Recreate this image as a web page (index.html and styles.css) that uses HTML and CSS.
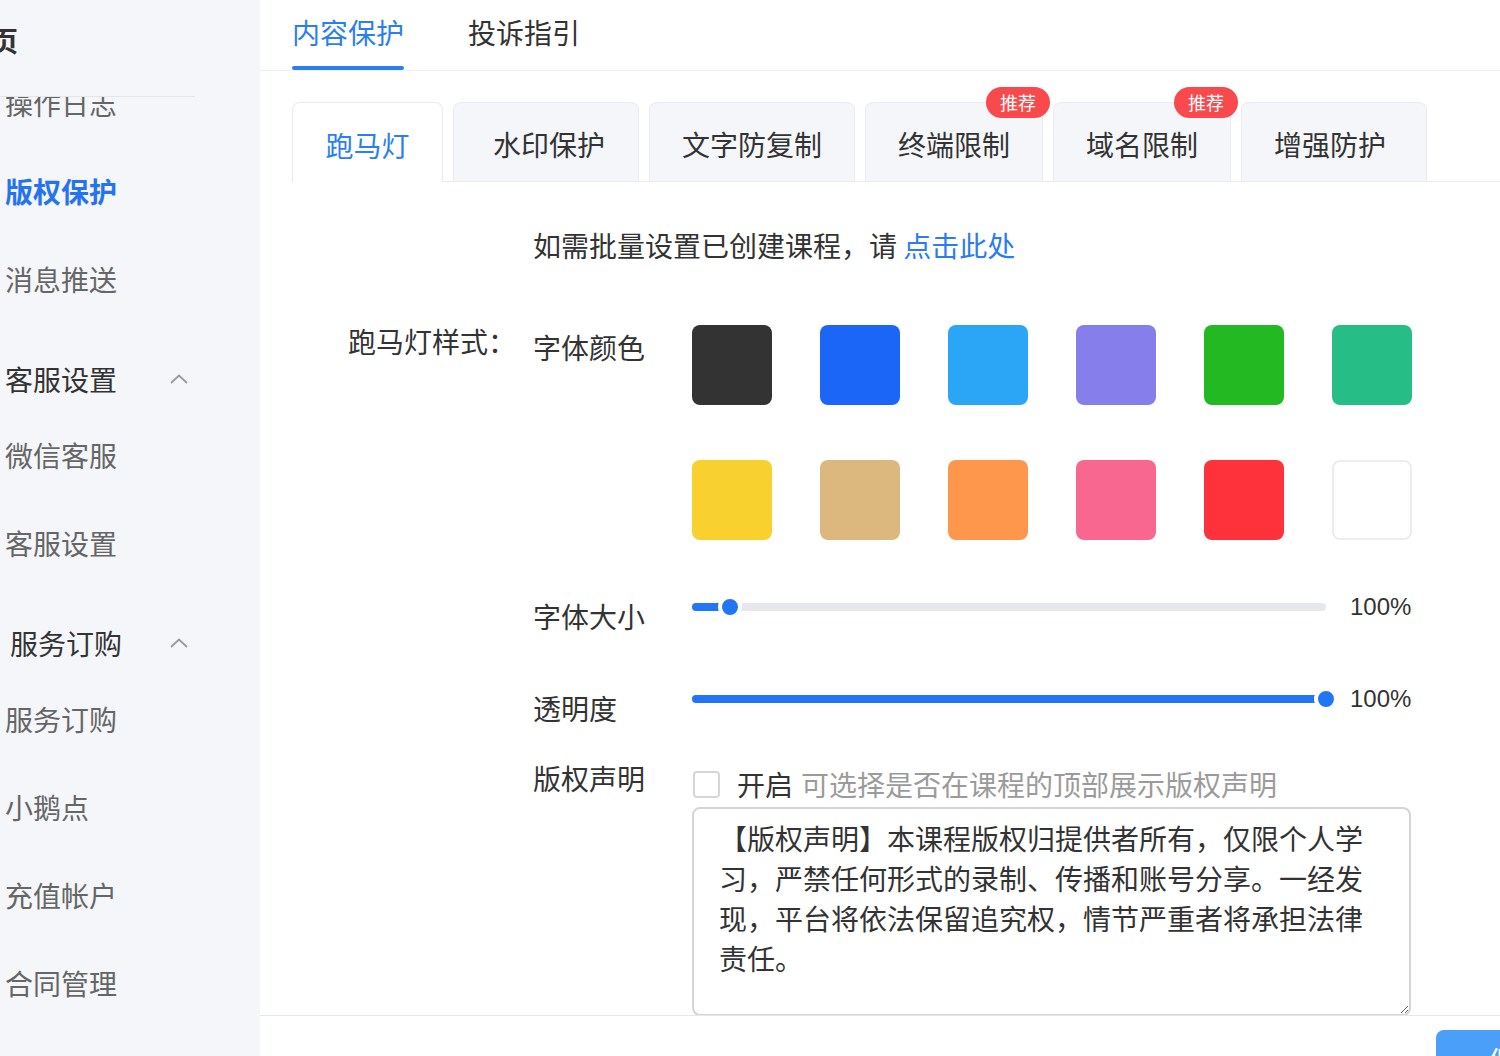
FILE: index.html
```html
<!DOCTYPE html>
<html lang="zh-CN">
<head>
    <meta charset="UTF-8">
    <meta name="viewport" content="width=device-width, initial-scale=1.0">
    <title>版权保护</title>
    <link rel="stylesheet" href="styles.css">
</head>
<body>

<div class="layout">
    <!-- Sidebar -->
    <div class="sidebar">
        <div class="sidebar-head">
            <div class="sidebar-title">首页</div>
        </div>
        <div class="menu">
            <div class="menu-list">
                <div class="menu-item">操作日志</div>
                <div class="menu-item active">版权保护</div>
                <div class="menu-item">消息推送</div>

                <div class="menu-group">
                    <span>客服设置</span>
                    <svg class="chevron" width="18" height="10" viewBox="0 0 18 10"><polyline points="1,9 9,1.5 17,9" fill="none" stroke="#9a9a9a" stroke-width="1.8"/></svg>
                </div>
                <div class="menu-item">微信客服</div>
                <div class="menu-item">客服设置</div>

                <div class="menu-group indent">
                    <span>服务订购</span>
                    <svg class="chevron" width="18" height="10" viewBox="0 0 18 10"><polyline points="1,9 9,1.5 17,9" fill="none" stroke="#9a9a9a" stroke-width="1.8"/></svg>
                </div>
                <div class="menu-item">服务订购</div>
                <div class="menu-item">小鹅点</div>
                <div class="menu-item">充值帐户</div>
                <div class="menu-item">合同管理</div>
            </div>
        </div>
    </div>

    <!-- Main -->
    <div class="main">
        <div class="top-tabs">
            <div class="top-tab active">内容保护<span class="tab-bar"></span></div>
            <div class="top-tab">投诉指引</div>
        </div>

        <div class="body">
            <div class="card-tabs">
                <div class="card-tab active">跑马灯</div>
                <div class="card-tab shift">水印保护</div>
                <div class="card-tab">文字防复制</div>
                <div class="card-tab">终端限制<span class="badge">推荐</span></div>
                <div class="card-tab">域名限制<span class="badge">推荐</span></div>
                <div class="card-tab shift-left">增强防护</div>
            </div>

            <div class="form">
                <div class="notice">如需批量设置已创建课程，请 <a class="link">点击此处</a></div>

                <div class="form-row">
                    <div class="form-label">跑马灯样式：</div>
                    <div class="form-fields">
                        <div class="field">
                            <div class="field-label color-label">字体颜色</div>
                            <div class="swatches">
                                <div class="swatch" style="background:#333333"></div>
                                <div class="swatch" style="background:#1b66f6"></div>
                                <div class="swatch" style="background:#2ba6f6"></div>
                                <div class="swatch" style="background:#867eea"></div>
                                <div class="swatch" style="background:#22b923"></div>
                                <div class="swatch" style="background:#26bd86"></div>
                                <div class="swatch" style="background:#f8d12f"></div>
                                <div class="swatch" style="background:#dcb87e"></div>
                                <div class="swatch" style="background:#fe974c"></div>
                                <div class="swatch" style="background:#f8678f"></div>
                                <div class="swatch" style="background:#fe323b"></div>
                                <div class="swatch white"></div>
                            </div>
                        </div>

                        <div class="field slider-field">
                            <div class="field-label slider-label">字体大小</div>
                            <div class="slider">
                                <div class="track">
                                    <div class="fill" style="width:38px"></div>
                                    <div class="thumb" style="left:38px"></div>
                                </div>
                                <div class="value">100%</div>
                            </div>
                        </div>

                        <div class="field slider-field opacity">
                            <div class="field-label slider-label">透明度</div>
                            <div class="slider">
                                <div class="track">
                                    <div class="fill" style="width:634px"></div>
                                    <div class="thumb" style="left:634px"></div>
                                </div>
                                <div class="value">100%</div>
                            </div>
                        </div>

                        <div class="field copyright">
                            <div class="field-label">版权声明</div>
                            <div class="copyright-box">
                                <div class="check-line">
                                    <span class="checkbox"></span>
                                    <span>开启</span>
                                    <span class="hint">可选择是否在课程的顶部展示版权声明</span>
                                </div>
                                <textarea class="statement">【版权声明】本课程版权归提供者所有，仅限个人学习，严禁任何形式的录制、传播和账号分享。一经发现，平台将依法保留追究权，情节严重者将承担法律责任。</textarea>
                            </div>
                        </div>
                    </div>
                </div>
            </div>
        </div>

        <div class="footer">
            <button class="save-btn">保存</button>
        </div>
    </div>
</div>

</body>
</html>
```

FILE: styles.css
```css
body {
    margin: 0;
    height: 100vh;
    overflow: hidden;
    font-family: "Noto Sans CJK SC", "Noto Sans", sans-serif;
    color: #333;
    background-color: #fff;
}
.layout {
    display: flex;
    height: 1056px;
}

/* sidebar */
.sidebar {
    width: 260px;
    flex-shrink: 0;
    background-color: #f5f6fa;
    overflow: hidden;
    display: flex;
    flex-direction: column;
}
.sidebar-head {
    width: 195px;
    height: 96px;
    border-bottom: 1px solid #e4e5e9;
    flex-shrink: 0;
}
.sidebar-title {
    margin-left: -38px;
    padding-top: 20px;
    font-size: 28px;
    line-height: 40px;
    font-weight: bold;
    color: #333;
    white-space: nowrap;
}
.menu {
    flex: 1;
    overflow: hidden;
}
.menu-list {
    width: 195px;
    margin-top: -38px;
}
.menu-item {
    height: 88px;
    line-height: 88px;
    padding-left: 5px;
    font-size: 28px;
    color: #666;
}
.menu-item.active {
    color: #2673f0;
    font-weight: bold;
}
.menu-group {
    margin-top: 24px;
    height: 64px;
    display: flex;
    align-items: center;
    justify-content: space-between;
    padding: 0 7px 0 5px;
    font-size: 28px;
    color: #333;
}
.menu-group.indent {
    padding-left: 10px;
}

/* main */
.main {
    flex: 1;
    min-width: 0;
    display: flex;
    flex-direction: column;
}
.top-tabs {
    height: 70px;
    flex-shrink: 0;
    display: flex;
    gap: 64px;
    padding-left: 32px;
    border-bottom: 1px solid #f0f0f2;
}
.top-tab {
    padding-top: 12px;
    font-size: 28px;
    line-height: 40px;
    color: #333;
}
.top-tab.active {
    color: #2a7ff0;
}
.tab-bar {
    display: block;
    height: 4px;
    margin-top: 14px;
    border-radius: 2px;
    background-color: #2a7ff0;
}
.body {
    flex: 1;
    overflow: hidden;
    padding: 31px 0 0 32px;
}

/* card tabs */
.card-tabs {
    display: flex;
    align-items: flex-start;
    gap: 10px;
    border-bottom: 1px solid #ececee;
}
.card-tab {
    position: relative;
    box-sizing: border-box;
    height: 79px;
    padding-top: 4px;
    display: flex;
    align-items: center;
    justify-content: center;
    border: 1px solid #ebecef;
    border-bottom: none;
    border-radius: 8px 8px 0 0;
    background-color: #f5f6fa;
    font-size: 28px;
    color: #333;
}
.card-tab:nth-child(1) { width: 151px; }
.card-tab:nth-child(2) { width: 186px; }
.card-tab:nth-child(3) { width: 206px; }
.card-tab:nth-child(4) { width: 178px; }
.card-tab:nth-child(5) { width: 178px; }
.card-tab:nth-child(6) { width: 186px; }
.card-tab.shift {
    padding-left: 6px;
}
.card-tab.shift-left {
    padding-right: 8px;
}
.card-tab.active {
    height: 80px;
    margin-bottom: -1px;
    background-color: #fff;
    color: #2a7ff0;
}
.badge {
    position: absolute;
    top: -16px;
    right: -8px;
    height: 31px;
    line-height: 31px;
    padding: 0 14px;
    border-radius: 16px;
    background-color: #f84a4c;
    color: #fff;
    font-size: 18px;
}

/* form */
.form {
    padding-left: 56px;
}
.notice {
    margin-top: 43px;
    padding-left: 185px;
    font-size: 28px;
    line-height: 40px;
    color: #333;
}
.link {
    color: #2b7cf2;
    cursor: pointer;
}
.form-row {
    display: flex;
    margin-top: 60px;
}
.form-label {
    width: 185px;
    flex-shrink: 0;
    font-size: 28px;
    line-height: 32px;
    color: #333;
}
.form-fields {
    display: flex;
    flex-direction: column;
}
.field {
    display: flex;
}
.field-label {
    width: 159px;
    flex-shrink: 0;
    font-size: 28px;
    line-height: 40px;
    color: #333;
}
.color-label {
    padding-top: 2px;
}
.swatches {
    display: grid;
    grid-template-columns: repeat(6, 80px);
    column-gap: 48px;
    row-gap: 55px;
}
.swatch {
    box-sizing: border-box;
    width: 80px;
    height: 80px;
    border-radius: 8px;
}
.swatch.white {
    background-color: #fff;
    border: 2px solid #ededed;
}

/* sliders */
.slider-field {
    margin-top: 47px;
}
.slider-field.opacity {
    margin-top: 43px;
}
.slider-label {
    padding-top: 9px;
}
.slider {
    height: 40px;
    display: flex;
    align-items: center;
}
.track {
    position: relative;
    width: 634px;
    height: 8px;
    border-radius: 4px;
    background-color: #e5e7ed;
}
.fill {
    height: 100%;
    border-radius: 4px;
    background-color: #2276f6;
}
.thumb {
    position: absolute;
    top: 50%;
    width: 16px;
    height: 16px;
    border: 4px solid #fff;
    border-radius: 50%;
    background-color: #2276f6;
    transform: translate(-50%, -50%);
}
.value {
    margin-left: 24px;
    font-family: "Liberation Sans", Arial, sans-serif;
    font-size: 24px;
    color: #333;
}

/* copyright */
.copyright {
    margin-top: 30px;
}
.check-line {
    height: 40px;
    margin-top: 6px;
    display: flex;
    align-items: center;
    font-size: 28px;
    color: #333;
}
.checkbox {
    box-sizing: border-box;
    width: 27px;
    height: 27px;
    margin: 0 17px 0 1px;
    border: 2px solid #d6d6d6;
    border-radius: 4px;
    background-color: #fff;
}
.hint {
    margin-left: 8px;
    color: #9b9b9b;
}
.statement {
    display: block;
    box-sizing: border-box;
    width: 719px;
    height: 209px;
    margin-top: 3px;
    padding: 9px 25px;
    border: 2px solid #d5d5d5;
    border-radius: 8px;
    font-family: "Noto Sans CJK SC", sans-serif;
    font-size: 28px;
    line-height: 40px;
    color: #333;
    resize: vertical;
    outline: none;
}

/* footer */
.footer {
    box-sizing: border-box;
    height: 41px;
    flex-shrink: 0;
    padding-top: 14px;
    display: flex;
    justify-content: flex-end;
    border-top: 1px solid #e8e8ea;
    overflow: hidden;
    background-color: #fff;
}
.save-btn {
    flex-shrink: 0;
    width: 160px;
    height: 60px;
    margin-right: -96px;
    border: none;
    border-radius: 8px;
    background-color: #4aa0f9;
    color: #fff;
    font-family: "Noto Sans CJK SC", sans-serif;
    font-size: 28px;
    line-height: 60px;
    padding: 0;
}
```
